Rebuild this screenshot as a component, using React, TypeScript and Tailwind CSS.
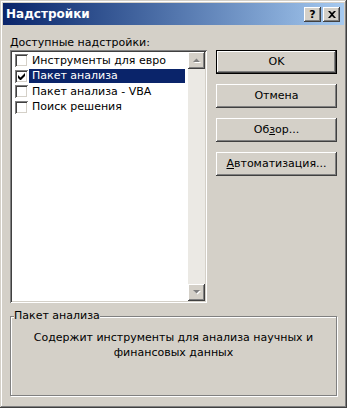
const raised =
  "shadow-[inset_-1px_-1px_#404040,inset_1px_1px_#ffffff,inset_-2px_-2px_#808080,inset_2px_2px_#d4d0c8]";
const sunken =
  "shadow-[inset_1px_1px_#808080,inset_-1px_-1px_#ffffff,inset_2px_2px_#404040,inset_-2px_-2px_#d4d0c8]";

const addins = [
  { label: "Инструменты для евро", checked: false },
  { label: "Пакет анализа", checked: true },
  { label: "Пакет анализа - VBA", checked: false },
  { label: "Поиск решения", checked: false },
];

export default function App() {
  return (
    <div className="h-[408px] w-[347px] bg-[#d4d0c8] p-[3px] font-['DejaVu_Sans',sans-serif] text-[11px] text-black shadow-[inset_-1px_-1px_#404040,inset_1px_1px_#d4d0c8,inset_-2px_-2px_#808080,inset_2px_2px_#ffffff]">
      <div className="flex h-[22px] items-center justify-between bg-linear-to-r from-[#0a246a] to-[#a6caf0] pl-[3px] pr-[4px]">
        <span className="text-[12px] font-bold text-white">Надстройки</span>
        <div className="flex gap-[2px]">
          <TitleButton>
            <span className="text-[11px] font-bold leading-none">?</span>
          </TitleButton>
          <TitleButton>
            <svg width="8" height="7" viewBox="0 0 8 7">
              <path d="M0 0h2l2 2 2-2h2L5 3.5 8 7H6L4 5 2 7H0l3-3.5z" fill="#000" />
            </svg>
          </TitleButton>
        </div>
      </div>

      <div className="px-[7px] pt-[11px]">
        <div className="flex gap-[9px]">
          <div className="w-[197px]">
            <div className="h-[14px] leading-[14px]">
              <u>Д</u>оступные надстройки:
            </div>
            <div className={`flex h-[253px] bg-white p-[2px] ${sunken}`}>
              <div className="flex-1 pt-[1px]">
                {addins.map((item) => (
                  <div key={item.label} className="flex h-[15.5px] items-center">
                    <Checkbox checked={item.checked} />
                    <span
                      className={
                        item.checked
                          ? "ml-[1px] mr-[3px] flex h-[14px] flex-1 items-center bg-[#0a246a] px-[3px] text-white"
                          : "ml-[1px] px-[3px]"
                      }
                    >
                      {item.label}
                    </span>
                  </div>
                ))}
              </div>
              <div className="flex w-[17px] flex-col bg-[#ebe9e4]">
                <ScrollArrow up />
                <div className="flex-1" />
                <ScrollArrow />
              </div>
            </div>
          </div>

          <div className="flex w-[121px] flex-col gap-[10px] pt-[14px]">
            <button className="h-[24px] border border-black bg-[#d4d0c8] shadow-[inset_-1px_-1px_#404040,inset_1px_1px_#ffffff,inset_-2px_-2px_#808080]">
              OK
            </button>
            <DialogButton>Отмена</DialogButton>
            <DialogButton>
              Об<u>з</u>ор...
            </DialogButton>
            <DialogButton>
              <u>А</u>втоматизация...
            </DialogButton>
          </div>
        </div>

        <fieldset className="mt-[6px] h-[87px] border border-[#808080] px-[3px] shadow-[inset_1px_1px_#ffffff,1px_1px_#ffffff]">
          <legend className="bg-[#d4d0c8] leading-[14px]">Пакет анализа</legend>
          <p className="pt-[7px] text-center leading-[15px]">
            Содержит инструменты для анализа научных и
            <br />
            финансовых данных
          </p>
        </fieldset>
      </div>
    </div>
  );
}

function TitleButton({ children }: { children: React.ReactNode }) {
  return (
    <div className={`flex h-[15px] w-[17px] items-center justify-center bg-[#d4d0c8] ${raised}`}>
      {children}
    </div>
  );
}

function DialogButton({ children }: { children: React.ReactNode }) {
  return <button className={`h-[24px] bg-[#d4d0c8] ${raised}`}>{children}</button>;
}

function Checkbox({ checked }: { checked: boolean }) {
  return (
    <span className={`ml-[3px] flex h-[13px] w-[13px] shrink-0 items-center justify-center bg-white ${sunken}`}>
      {checked ? (
        <svg width="7" height="7" viewBox="0 0 7 7">
          <path d="M0 2v3l2 2h1l4-4V0L2.5 4.5z" fill="#000" />
        </svg>
      ) : null}
    </span>
  );
}

function ScrollArrow({ up }: { up?: boolean }) {
  return (
    <div className={`flex h-[17px] w-[17px] items-center justify-center bg-[#d4d0c8] ${raised}`}>
      <svg width="8" height="5" viewBox="0 0 8 5">
        {up ? (
          <>
            <path d="M1 5h7L4.5 1.5z" fill="#ffffff" />
            <path d="M0 4h7L3.5 0.5z" fill="#808080" />
          </>
        ) : (
          <>
            <path d="M1 1h7L4.5 4.5z" fill="#ffffff" />
            <path d="M0 0h7L3.5 3.5z" fill="#808080" />
          </>
        )}
      </svg>
    </div>
  );
}
